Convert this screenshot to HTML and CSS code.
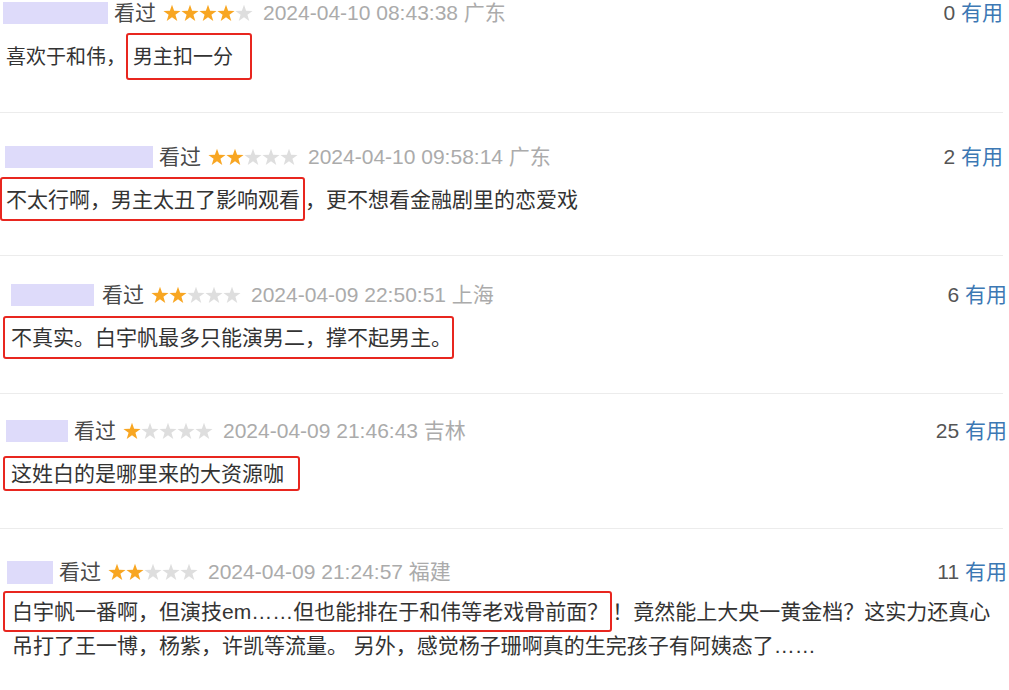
FILE: index.html
```html
<!DOCTYPE html>
<html lang="zh-CN">
<head>
  <meta charset="UTF-8">
  <title>短评</title>
  <link rel="stylesheet" href="styles.css">
</head>
<body>
  <svg class="defs" aria-hidden="true">
    <symbol id="star" viewBox="0 0 20 20">
      <polygon points="10,0.8 12.35,7.56 19.51,7.71 13.8,12.04 15.88,18.89 10,14.8 4.12,18.89 6.2,12.04 0.49,7.71 7.65,7.56"/>
    </symbol>
  </svg>

  <div class="comments">
    <div class="review review-1">
      <div class="info">
        <span class="name" style="width:105px"></span>
        <span class="watched">看过</span>
        <span class="rating">
          <svg class="star on"><use href="#star"/></svg><svg class="star on"><use href="#star"/></svg><svg class="star on"><use href="#star"/></svg><svg class="star on"><use href="#star"/></svg><svg class="star"><use href="#star"/></svg>
        </span>
        <span class="time">2024-04-10 08:43:38 广东</span>
        <span class="votes"><span class="count">0</span> <a class="useful">有用</a></span>
      </div>
      <p class="text">喜欢于和伟，<span class="mark">男主扣一分</span></p>
    </div>

    <div class="review review-2">
      <div class="info">
        <span class="name" style="width:148px"></span>
        <span class="watched">看过</span>
        <span class="rating">
          <svg class="star on"><use href="#star"/></svg><svg class="star on"><use href="#star"/></svg><svg class="star"><use href="#star"/></svg><svg class="star"><use href="#star"/></svg><svg class="star"><use href="#star"/></svg>
        </span>
        <span class="time">2024-04-10 09:58:14 广东</span>
        <span class="votes"><span class="count">2</span> <a class="useful">有用</a></span>
      </div>
      <p class="text"><span class="mark">不太行啊，男主太丑了影响观看</span>，更不想看金融剧里的恋爱戏</p>
    </div>

    <div class="review review-3">
      <div class="info">
        <span class="name" style="width:83px"></span>
        <span class="watched">看过</span>
        <span class="rating">
          <svg class="star on"><use href="#star"/></svg><svg class="star on"><use href="#star"/></svg><svg class="star"><use href="#star"/></svg><svg class="star"><use href="#star"/></svg><svg class="star"><use href="#star"/></svg>
        </span>
        <span class="time">2024-04-09 22:50:51 上海</span>
        <span class="votes"><span class="count">6</span> <a class="useful">有用</a></span>
      </div>
      <p class="text"><span class="mark">不真实。白宇帆最多只能演男二，撑不起男主。</span></p>
    </div>

    <div class="review review-4">
      <div class="info">
        <span class="name" style="width:62px"></span>
        <span class="watched">看过</span>
        <span class="rating">
          <svg class="star on"><use href="#star"/></svg><svg class="star"><use href="#star"/></svg><svg class="star"><use href="#star"/></svg><svg class="star"><use href="#star"/></svg><svg class="star"><use href="#star"/></svg>
        </span>
        <span class="time">2024-04-09 21:46:43 吉林</span>
        <span class="votes"><span class="count">25</span> <a class="useful">有用</a></span>
      </div>
      <p class="text"><span class="mark">这姓白的是哪里来的大资源咖</span></p>
    </div>

    <div class="review review-5">
      <div class="info">
        <span class="name" style="width:46px"></span>
        <span class="watched">看过</span>
        <span class="rating">
          <svg class="star on"><use href="#star"/></svg><svg class="star on"><use href="#star"/></svg><svg class="star"><use href="#star"/></svg><svg class="star"><use href="#star"/></svg><svg class="star"><use href="#star"/></svg>
        </span>
        <span class="time">2024-04-09 21:24:57 福建</span>
        <span class="votes"><span class="count">11</span> <a class="useful">有用</a></span>
      </div>
      <p class="text"><span class="mark">白宇帆一番啊，但演技em……但也能排在于和伟等老戏骨前面？</span>！竟然能上大央一黄金档？这实力还真心吊打了王一博，杨紫，许凯等流量。 另外，感觉杨子珊啊真的生完孩子有阿姨态了……</p>
    </div>
  </div>
</body>
</html>
```

FILE: styles.css
```css
body {
  margin: 0;
  background: #fff;
  font-family: "Liberation Sans", Arial, "Noto Sans CJK SC", sans-serif;
  color: #333;
}
.defs {
  display: none;
}
.comments {
  width: 1003px;
}
.review {
  padding: 0 0 38px;
  border-bottom: 1px solid #ececec;
}
.review-1 {
  padding-top: 0;
}
.review-2 {
  padding-top: 31px;
}
.review-3 {
  padding-top: 26px;
}
.review-4 {
  padding-top: 24px;
  padding-bottom: 37px;
}
.review-5 {
  padding-top: 30px;
  padding-bottom: 0;
  border-bottom: none;
}

/* header row */
.info {
  display: flex;
  align-items: center;
  height: 26px;
  font-size: 21px;
  line-height: 26px;
}
.name {
  height: 22px;
  background-color: #dedbfa;
  margin-left: 3px;
}
.review-2 .name {
  margin-left: 5px;
}
.review-3 .name {
  margin-left: 11px;
}
.review-4 .name {
  margin-left: 6px;
}
.review-5 .name {
  margin-left: 7px;
  height: 23px;
}
.watched {
  color: #494949;
  margin-left: 6px;
}
.review-3 .watched {
  margin-left: 8px;
}
.rating {
  display: flex;
  margin-left: 7px;
}
.star {
  width: 18px;
  height: 18px;
  fill: #dedede;
}
.star.on {
  fill: #f8a622;
}
.time {
  color: #ababab;
  margin-left: 10px;
}
.votes {
  margin-left: auto;
  white-space: nowrap;
}
.review-3 .votes,
.review-4 .votes,
.review-5 .votes {
  margin-right: -4px;
}
.count {
  color: #555;
}
.useful {
  color: #3c78b4;
  text-decoration: none;
}

/* comment body */
.text {
  margin: 13px 0 0;
  padding-left: 11px;
  font-size: 21px;
  line-height: 34px;
  color: #333;
}
.review-1 .text {
  margin-top: 14px;
  padding-left: 6px;
  font-size: 20px;
}
.review-2 .text {
  padding-left: 6px;
}
.review-5 .text {
  margin-top: 10px;
  padding-left: 12px;
}
.mark {
  border: 2px solid #e8261f;
  border-radius: 3px;
  padding: 8px 0 8px 6px;
  margin-left: -8px;
}
.review-1 .mark {
  margin-left: 0;
  padding: 11px 17px 10px 5px;
}
.review-2 .mark {
  margin-left: -6px;
  padding: 9px 3px 8px 4px;
}
.review-4 .mark {
  padding: 4px 14px 4px 6px;
}
.review-5 .mark {
  margin-left: -9px;
  padding: 7px 2px 7px 7px;
}
```
